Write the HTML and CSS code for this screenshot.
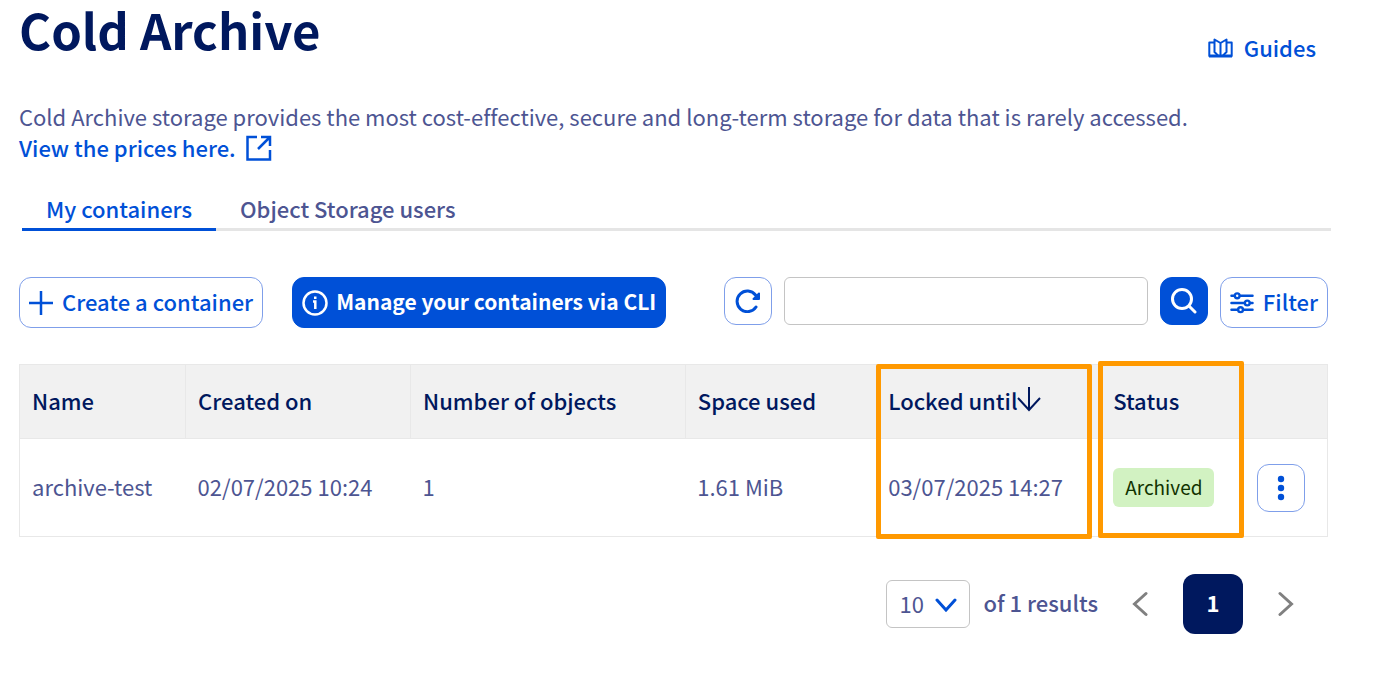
FILE: index.html
```html
<!DOCTYPE html>
<html lang="en">
<head>
    <meta charset="UTF-8">
    <meta name="viewport" content="width=device-width, initial-scale=1.0">
    <title>Cold Archive</title>
    <link rel="stylesheet" href="styles.css">
</head>
<body>
    <main class="page">
        <header class="header">
            <h1>Cold Archive</h1>
            <a class="guides" href="#">
                <svg width="25" height="20" viewBox="0 0 25 20" fill="none" stroke="currentColor" stroke-width="2" stroke-linejoin="round">
                    <path d="M6 4.500H1.300V18H23.700V4.500H19M12.500 5L6.500 1.500V14L10 17.500M12.500 5L18.500 1.500V14L15 17.500M12.500 5V17"/>
                    <path d="M1 18H24" stroke-width="3"/>
                </svg>
                Guides
            </a>
        </header>

        <p class="intro">
            Cold Archive storage provides the most cost-effective, secure and long-term storage for data that is rarely accessed.<br>
            <a href="#">View the prices here.
                <svg width="26" height="26" viewBox="0 0 26 26" fill="none" stroke="currentColor" stroke-width="2.500">
                    <path d="M11 2H1.500V24.500H24V15M15 2H24V11M24 2L12 14"/>
                </svg>
            </a>
        </p>

        <nav class="tabs">
            <a class="tab active" href="#">My containers</a>
            <a class="tab" href="#">Object Storage users</a>
        </nav>

        <div class="toolbar">
            <button class="btn" type="button">
                <svg width="24" height="24" viewBox="0 0 24 24" fill="none" stroke="currentColor" stroke-width="2.500">
                    <path d="M12 0V24M0 12H24"/>
                </svg>
                Create a container
            </button>
            <button class="btn primary cli" type="button">
                <svg width="26" height="26" viewBox="0 0 26 26" fill="none" stroke="currentColor" stroke-width="2.500">
                    <circle cx="13" cy="13" r="11.500"/>
                    <path d="M11 11.500H13.300V19M12 7.800H14.500"/>
                </svg>
                Manage your containers via CLI
            </button>
            <form class="search">
                <button class="btn square" type="button" aria-label="Refresh">
                    <svg width="26" height="24" viewBox="0 0 26 24" fill="none" stroke="currentColor" stroke-width="3" stroke-linecap="round" stroke-linejoin="round">
                        <path d="M21 18A10.300 10.300 0 1 1 20.500 6"/>
                        <path d="M24 4.500V10H18.500Z" fill="currentColor" stroke-width="2"/>
                    </svg>
                </button>
                <input type="text" aria-label="Search containers">
                <button class="btn primary square" type="button" aria-label="Search">
                    <svg width="26" height="26" viewBox="0 0 26 26" fill="none" stroke="currentColor" stroke-width="3" stroke-linecap="round">
                        <circle cx="11" cy="11" r="9.500"/>
                        <path d="M18 18L24 24"/>
                    </svg>
                </button>
                <button class="btn filter" type="button">
                    <svg width="24" height="22" viewBox="0 0 25 22" fill="none" stroke="currentColor" stroke-width="2.500" stroke-linecap="round">
                        <path d="M1.500 3.500H5M11 3.500H23.500M1.500 11H15M21 11H23.500M1.500 18H8M14 18H23.500"/>
                        <circle cx="7.500" cy="3.500" r="2.500"/>
                        <circle cx="18" cy="11" r="2.500"/>
                        <circle cx="11" cy="18" r="2.500"/>
                    </svg>
                    Filter
                </button>
            </form>
        </div>

        <div class="table-wrap">
            <table>
                <colgroup>
                    <col class="col-name">
                    <col class="col-created">
                    <col class="col-objects">
                    <col class="col-space">
                    <col class="col-locked">
                    <col class="col-status">
                    <col>
                </colgroup>
                <thead>
                    <tr>
                        <th>Name</th>
                        <th>Created on</th>
                        <th>Number of objects</th>
                        <th>Space used</th>
                        <th>Locked until<svg width="26" height="26" viewBox="0 0 26 26" fill="none" stroke="currentColor" stroke-width="2">
                            <path d="M12 1V24M1 12L12 24L23 12"/>
                        </svg></th>
                        <th>Status</th>
                        <th></th>
                    </tr>
                </thead>
                <tbody>
                    <tr>
                        <td>archive-test</td>
                        <td>02/07/2025 10:24</td>
                        <td>1</td>
                        <td>1.61 MiB</td>
                        <td>03/07/2025 14:27</td>
                        <td><span class="badge">Archived</span></td>
                        <td>
                            <button class="btn square" type="button" aria-label="Actions">
                                <svg width="8" height="26" viewBox="0 0 8 26" fill="currentColor">
                                    <circle cx="4" cy="4" r="3.200"/>
                                    <circle cx="4" cy="13" r="3.200"/>
                                    <circle cx="4" cy="22" r="3.200"/>
                                </svg>
                            </button>
                        </td>
                    </tr>
                </tbody>
            </table>
            <!-- Highlight frames over the last columns -->
            <div class="mark mark-locked"></div>
            <div class="mark mark-status"></div>
        </div>

        <div class="pagination">
            <span class="select">
                <select aria-label="Results per page">
                    <option>10</option>
                    <option>25</option>
                    <option>50</option>
                </select>
                <svg width="22" height="14" viewBox="0 0 22 14" fill="none" stroke="currentColor" stroke-width="3" stroke-linecap="round">
                    <path d="M2 2L11 12L20 2"/>
                </svg>
            </span>
            <span class="results">of 1 results</span>
            <button class="arrow" type="button" aria-label="Previous page">
                <svg width="16" height="26" viewBox="0 0 16 26" fill="none" stroke="currentColor" stroke-width="3" stroke-linecap="round">
                    <path d="M14 2.500L2.500 13L14 23.500"/>
                </svg>
            </button>
            <button class="current" type="button">1</button>
            <button class="arrow" type="button" aria-label="Next page">
                <svg width="16" height="26" viewBox="0 0 16 26" fill="none" stroke="currentColor" stroke-width="3" stroke-linecap="round">
                    <path d="M2 2.500L13.500 13L2 23.500"/>
                </svg>
            </button>
        </div>
    </main>
</body>
</html>
```
FILE: styles.css
```css
* {
    box-sizing: border-box;
}

body {
    margin: 0;
    background: #fff;
    color: #4d5592;
    font-family: "Noto Sans CJK SC", "Open Sans", sans-serif;
    font-size: 22px;
    font-variant-ligatures: none;
    line-height: 31px;
}

a {
    color: #0050d7;
    font-weight: 500;
    text-decoration: none;
}

svg {
    flex-shrink: 0;
}

button,
input,
select {
    font: inherit;
}

button {
    cursor: pointer;
}

.page {
    padding: 0 69px 0 19px;
}

.header {
    display: flex;
    justify-content: space-between;
    align-items: flex-start;
    margin-right: 15px;
}

h1 {
    margin: 0;
    color: #00185e;
    font-size: 49px;
    font-weight: 700;
    line-height: 58px;
}

.guides {
    display: flex;
    align-items: center;
    gap: 11px;
    margin-top: 32px;
}

.intro {
    margin: 38px 0 0;
}

.intro svg {
    margin-left: 5px;
    vertical-align: -4px;
}

.tabs {
    display: flex;
    margin: 25px 0 0 3px;
    border-bottom: 3px solid #e5e5e5;
}

.tab {
    height: 43px;
    margin-bottom: -3px;
    padding: 5px 24px;
    color: #4d5592;
}

.tab.active {
    color: #0050d7;
    border-bottom: 3px solid #0050d7;
}

.toolbar {
    display: flex;
    align-items: flex-start;
    margin: 46px 3px 0 0;
}

.btn {
    display: flex;
    align-items: center;
    gap: 9px;
    height: 51px;
    padding: 0 9px 2px;
    border: 1px solid #7f9fea;
    border-radius: 12px;
    background: #fff;
    color: #0050d7;
    font-weight: 500;
    white-space: nowrap;
}

.btn svg {
    margin-top: 2px;
}

.primary {
    border-color: #0050d7;
    background: #0050d7;
    color: #fff;
    font-weight: 700;
}

.square {
    justify-content: center;
    flex-shrink: 0;
    width: 48px;
    height: 48px;
    padding: 0;
}

.square svg {
    margin-top: 0;
}

.cli {
    gap: 8px;
    margin-left: 29px;
    font-size: 21px;
}

.search {
    display: flex;
    flex: 1;
    gap: 12px;
    margin-left: 58px;
}

.search input {
    flex: 1;
    min-width: 0;
    height: 48px;
    padding: 0 12px;
    border: 1px solid #c4c4c4;
    border-radius: 6px;
    color: #4d5592;
}

.table-wrap {
    position: relative;
    margin: 36px 3px 0 0;
}

table {
    width: 100%;
    table-layout: fixed;
    border-collapse: collapse;
    border: 1px solid #e8e8e8;
}

th,
td {
    padding: 0 12px 2px;
    text-align: left;
    white-space: nowrap;
}

th {
    height: 74px;
    border-bottom: 1px solid #e8e8e8;
    background: #f1f1f1;
    color: #00185e;
    font-weight: 500;
}

th:nth-child(-n+3) {
    border-right: 1px solid #e8e8e8;
}

th svg {
    vertical-align: -2px;
}

td {
    height: 98px;
}

td:nth-last-child(-n+2) {
    padding-bottom: 0;
}

.col-name {
    width: 12.7%;
}

.col-created {
    width: 17.2%;
}

.col-objects {
    width: 21%;
}

.col-space {
    width: 14.6%;
}

.col-locked {
    width: 17.2%;
}

.col-status {
    width: 11%;
}

.badge {
    display: inline-block;
    padding: 3px 12px 5px;
    border-radius: 6px;
    background: #d2f2c2;
    color: #113300;
    font-size: 19px;
}

.mark {
    position: absolute;
    top: 0;
    bottom: -2px;
    border: 5px solid #ff9900;
    border-radius: 2px;
    pointer-events: none;
}

.mark-locked {
    left: 65.5%;
    width: 16.5%;
}

.mark-status {
    top: -3px;
    bottom: -1px;
    left: 82.4%;
    width: 11.2%;
}

.pagination {
    display: flex;
    justify-content: flex-end;
    align-items: center;
    margin: 37px 37px 0 0;
}

.select {
    position: relative;
    display: flex;
}

.select select {
    width: 84px;
    height: 48px;
    padding: 0 12px 2px;
    border: 1px solid #c4c4c4;
    border-radius: 6px;
    background: #fff;
    color: #4d5592;
    appearance: none;
}

.select svg {
    position: absolute;
    top: 18px;
    right: 13px;
    color: #0050d7;
    pointer-events: none;
}

.results {
    margin: 0 34px 0 13px;
    padding-bottom: 4px;
    font-weight: 500;
}

.arrow {
    display: flex;
    padding: 0;
    border: 0;
    background: none;
    color: #808080;
}

.current {
    width: 60px;
    height: 60px;
    margin: 0 35px;
    padding: 0 0 4px;
    border: 0;
    border-radius: 12px;
    background: #00185e;
    color: #fff;
    font-weight: 700;
}
```
